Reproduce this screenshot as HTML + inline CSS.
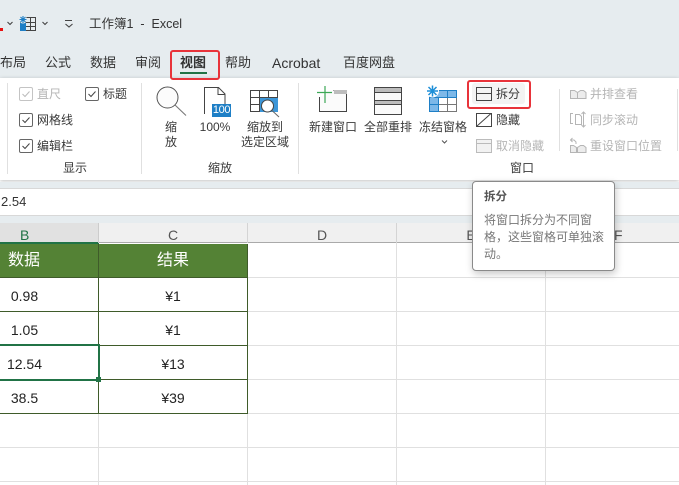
<!DOCTYPE html>
<html><head><meta charset="utf-8"><style>
html,body{margin:0;padding:0}
body{width:679px;height:485px;position:relative;overflow:hidden;background:#fff;font-family:"Liberation Sans","Noto Sans CJK SC",sans-serif;color:#333}
.a{position:absolute;white-space:nowrap}
.t{font-size:12px;line-height:16px;color:#3a3a3a}
.tab{font-size:13px;line-height:18px;top:54px;color:#333}
.d{color:#b5b5b5}
.c{text-align:center}
.cell{font-size:14px;line-height:20px;text-align:center;color:#222}
.ln{position:absolute;background:#e0e0e0}
.dg{position:absolute;background:#3f5b2a}
svg{position:absolute;overflow:visible}
.cb{position:absolute;width:12px;height:12px;border:1px solid #666;border-radius:2px;background:#fff}
.cb svg{left:0;top:0}
</style></head><body>
<div class="a" style="left:0;top:0;width:679px;height:78px;background:#e6ecef"></div>
<div class="a" style="left:0;top:28px;width:3px;height:3px;background:#e81010"></div>
<svg style="left:0;top:0" width="240" height="40" fill="none">
<path d="M7.500 22l2.500 2.500 2.500-2.500M42.500 22l2.500 2.500 2.500-2.500" stroke="#444" stroke-width="1.100"/>
<path d="M65 20.500h7M65.500 24l3.500 3 3.500-3" stroke="#444" stroke-width="1.100"/>
<rect x="20.500" y="17.500" width="15" height="13" stroke="#444"/>
<path d="M20 22.500h16M20 26.500h16M25.500 17v14M30.500 17v14" stroke="#444"/>
<rect x="20" y="23" width="6" height="8" fill="#1e7fc6"/>
<circle cx="23" cy="19.500" r="4" fill="#e6ecef"/>
<path d="M26.500 19.500h-7M23 16v7M20.500 17l5 5M25.500 17l-5 5" stroke="#1e7fc6" stroke-width="1.100"/>
</svg>
<div class="a" style="left:89px;top:15px;font-size:12.500px;line-height:18px;color:#333">工作簿1 &nbsp;-&nbsp; Excel</div>

<div class="a tab" style="left:0">布局</div>
<div class="a tab" style="left:45px">公式</div>
<div class="a tab" style="left:90px">数据</div>
<div class="a tab" style="left:135px">审阅</div>
<div class="a tab" style="left:180px;font-weight:bold">视图</div>
<div class="a" style="left:180px;top:72px;width:27px;height:2px;background:#217346"></div>
<div class="a" style="left:170px;top:50px;width:46px;height:26px;border:2px solid #e8333a;border-radius:3px;z-index:3"></div>
<div class="a tab" style="left:225px">帮助</div>
<div class="a tab" style="left:272px;font-size:14px">Acrobat</div>
<div class="a tab" style="left:343px">百度网盘</div>

<div class="a" style="left:0;top:78px;width:679px;height:102px;background:#fff;box-shadow:0 1px 4px rgba(0,0,0,.25)"></div>
<div class="a" style="left:0;top:182px;width:679px;height:6px;background:#e6ecef"></div>
<div class="ln" style="left:7px;top:83px;width:1px;height:91px"></div>
<div class="ln" style="left:141px;top:83px;width:1px;height:91px"></div>
<div class="ln" style="left:298px;top:83px;width:1px;height:91px"></div>
<div class="ln" style="left:559px;top:89px;width:1px;height:62px"></div>
<div class="ln" style="left:677px;top:89px;width:1px;height:62px"></div>

<!-- show group -->
<div class="cb" style="left:19px;top:87px;border-color:#c4c4c4"><svg width="12" height="12" fill="none"><path d="M2.500 6l2.500 2.500 4.500-5" stroke="#bbb"/></svg></div>
<div class="a t d" style="left:37px;top:86px">直尺</div>
<div class="cb" style="left:85px;top:87px"><svg width="12" height="12" fill="none"><path d="M2.500 6l2.500 2.500 4.500-5" stroke="#444"/></svg></div>
<div class="a t" style="left:103px;top:86px">标题</div>
<div class="cb" style="left:19px;top:113px"><svg width="12" height="12" fill="none"><path d="M2.500 6l2.500 2.500 4.500-5" stroke="#444"/></svg></div>
<div class="a t" style="left:37px;top:112px">网格线</div>
<div class="cb" style="left:19px;top:139px"><svg width="12" height="12" fill="none"><path d="M2.500 6l2.500 2.500 4.500-5" stroke="#444"/></svg></div>
<div class="a t" style="left:37px;top:138px">编辑栏</div>
<div class="a t c" style="left:50px;top:160px;width:50px">显示</div>

<div class="a" style="left:472px;top:83px;width:53px;height:21px;background:#f3f3f3;border-radius:3px"></div>

<svg style="left:0;top:0" width="679" height="180" fill="none">
<!-- zoom group -->
<circle cx="167.500" cy="97.500" r="10.500" stroke="#555" fill="#fcfcfc"/>
<path d="M175 105l11 10.500" stroke="#777" stroke-width="1.100"/>
<path d="M204.500 114V87.500h14l6.500 6.500v10M218 87.500v7h7" stroke="#444" fill="#fff"/>
<rect x="212" y="104" width="19" height="13" fill="#1e7fc6"/>
<rect x="250.500" y="90.500" width="27" height="21" stroke="#444" fill="#fff"/>
<path d="M250 97.500h28M250 104.500h11M259.500 90v22M268.500 90v8" stroke="#444"/>
<rect x="260" y="98" width="18" height="14" fill="#3c96d8"/>
<circle cx="267.500" cy="106" r="6" stroke="#444" fill="#fff"/>
<path d="M272 110.500l7 6.500" stroke="#666"/>

<!-- window group -->
<path d="M319.500 97v14.500h27v-21h-13" stroke="#444" fill="#fbfbfb"/>
<rect x="334" y="90" width="13" height="4" fill="#bdbdbd"/>
<path d="M317 92.500h15M325 86v17" stroke="#3ca856" stroke-width="1.200"/>
<rect x="374.500" y="87.500" width="27" height="27" stroke="#444" fill="#fafafa"/>
<rect x="375" y="88" width="26" height="4" fill="#bdbdbd"/>
<rect x="375" y="100" width="26" height="4" fill="#bdbdbd"/>
<path d="M374 92.500h28M374 100.500h28M374 104.500h28" stroke="#444"/>
<rect x="429.500" y="90.500" width="27" height="21" stroke="#1e7fc6" fill="#fff"/>
<rect x="429" y="90" width="28" height="7" fill="#7db8e8"/>
<rect x="429" y="97" width="10" height="15" fill="#7db8e8"/>
<path d="M429.500 90.500h27v7h-27zM429.500 97.500h9v14h-9zM447.500 90v7M429 104.500h10" stroke="#1e7fc6"/>
<path d="M439 104.500h18M447.500 98v14M456.500 98v13.500H439" stroke="#777"/>
<circle cx="432.500" cy="91" r="6.500" fill="#fff"/>
<path d="M427 91h11M432.500 85.500v11M428.500 87l8 8M436.500 87l-8 8" stroke="#1e8fd8" stroke-width="1.500"/>
<path d="M442 140.500l2.500 2.500 2.500-2.500" stroke="#555"/>

<rect x="476.500" y="87.500" width="15" height="13" stroke="#444"/>
<path d="M476 93.500h16" stroke="#444"/>
<rect x="476.500" y="113.500" width="15" height="13" stroke="#444"/>
<path d="M477 126l14-12.500" stroke="#444"/>
<rect x="476.500" y="139.500" width="15" height="13" stroke="#bbb" fill="#f2f2f2"/>
<path d="M476 143.500h16" stroke="#bbb"/>

<!-- disabled icons -->
<path d="M570.500 98.500v-8h4l3 2v6zM577.500 98.500v-6l3-2h3l2.500 2v6z" stroke="#b5b5b5" fill="#ececec"/>
<path d="M573 113.500h-2.500v10h2.500M575.500 124.500v-10h4l2 2v8zM583.500 112v15M581.500 114l2-2 2 2M581.500 125l2 2 2-2" stroke="#b5b5b5"/>
<path d="M570.500 152.500v-7h3l3 2v5zM577.500 152.500v-5l3-2h3l2.500 2v5z" stroke="#b5b5b5" fill="#ececec"/>
<path d="M572.500 138l-2 2 2 2M571 140h3l2 2v2" stroke="#b5b5b5"/>
</svg>
<div class="a" style="left:211px;top:104px;width:21px;text-align:center;font-size:11px;line-height:13px;color:#fff;letter-spacing:-.4px">100</div>

<div class="a t c" style="left:156px;top:119px;width:30px">缩</div>
<div class="a t c" style="left:156px;top:134px;width:30px">放</div>
<div class="a t c" style="left:195px;top:119px;width:40px">100%</div>
<div class="a t c" style="left:235px;top:119px;width:60px">缩放到</div>
<div class="a t c" style="left:235px;top:134px;width:60px">选定区域</div>
<div class="a t c" style="left:195px;top:160px;width:50px">缩放</div>

<div class="a t" style="left:309px;top:119px">新建窗口</div>
<div class="a t" style="left:364px;top:119px">全部重排</div>
<div class="a t" style="left:419px;top:119px">冻结窗格</div>

<div class="a" style="left:467px;top:80px;width:60px;height:25px;border:2px solid #e8333a;border-radius:3px"></div>
<div class="a t" style="left:496px;top:86px">拆分</div>
<div class="a t" style="left:496px;top:112px">隐藏</div>
<div class="a t d" style="left:496px;top:138px">取消隐藏</div>
<div class="a t c" style="left:497px;top:160px;width:50px">窗口</div>
<div class="a t d" style="left:590px;top:86px">并排查看</div>
<div class="a t d" style="left:590px;top:112px">同步滚动</div>
<div class="a t d" style="left:590px;top:138px">重设窗口位置</div>

<!-- formula bar -->
<div class="a" style="left:0;top:188px;width:679px;height:28px;background:#fff;border-top:1px solid #d8d8d8;border-bottom:1px solid #d8d8d8;box-sizing:border-box"></div>
<div class="a" style="left:1px;top:193px;font-size:13px;line-height:18px;color:#333">2.54</div>
<div class="a" style="left:0;top:216px;width:679px;height:7px;background:#e6ecef"></div>

<!-- column header -->
<div class="a" style="left:0;top:223px;width:679px;height:20px;background:#f0f0f0;border-bottom:1px solid #aaa;box-sizing:border-box"></div>
<div class="a" style="left:0;top:223px;width:99px;height:20px;background:#e1e1e1"></div>
<div class="a" style="left:0;top:242px;width:99px;height:2px;background:#217346"></div>
<div class="ln" style="left:98px;top:223px;width:1px;height:20px;background:#ccc"></div>
<div class="ln" style="left:247px;top:223px;width:1px;height:20px;background:#d4d4d4"></div>
<div class="ln" style="left:396px;top:223px;width:1px;height:20px;background:#d4d4d4"></div>
<div class="ln" style="left:545px;top:223px;width:1px;height:20px;background:#d4d4d4"></div>
<div class="a" style="left:20px;top:226px;font-size:14px;line-height:18px;color:#217346">B</div>
<div class="a c" style="left:99px;top:226px;width:148px;font-size:14px;line-height:18px;color:#555">C</div>
<div class="a c" style="left:248px;top:226px;width:148px;font-size:14px;line-height:18px;color:#555">D</div>
<div class="a c" style="left:397px;top:226px;width:148px;font-size:14px;line-height:18px;color:#555">E</div>
<div class="a" style="left:614px;top:226px;font-size:14px;line-height:18px;color:#555">F</div>

<!-- grid -->
<div class="ln" style="left:0;top:277px;width:679px;height:1px"></div>
<div class="ln" style="left:0;top:311px;width:679px;height:1px"></div>
<div class="ln" style="left:0;top:345px;width:679px;height:1px"></div>
<div class="ln" style="left:0;top:379px;width:679px;height:1px"></div>
<div class="ln" style="left:0;top:413px;width:679px;height:1px"></div>
<div class="ln" style="left:0;top:447px;width:679px;height:1px"></div>
<div class="ln" style="left:0;top:481px;width:679px;height:1px"></div>
<div class="ln" style="left:98px;top:413px;width:1px;height:72px"></div>
<div class="ln" style="left:247px;top:413px;width:1px;height:72px"></div>
<div class="ln" style="left:396px;top:243px;width:1px;height:242px"></div>
<div class="ln" style="left:545px;top:243px;width:1px;height:242px"></div>

<div class="a" style="left:0;top:244px;width:247px;height:33px;background:#548235"></div>
<div class="dg" style="left:0;top:277px;width:248px;height:1px"></div>
<div class="dg" style="left:0;top:311px;width:248px;height:1px"></div>
<div class="dg" style="left:0;top:345px;width:248px;height:1px"></div>
<div class="dg" style="left:0;top:379px;width:248px;height:1px"></div>
<div class="dg" style="left:0;top:413px;width:248px;height:1px"></div>
<div class="dg" style="left:98px;top:244px;width:1px;height:170px"></div>
<div class="dg" style="left:247px;top:244px;width:1px;height:170px"></div>

<div class="a cell" style="left:8px;top:251px;width:32px;color:#fff;font-size:16px">数据</div>
<div class="a cell" style="left:99px;top:251px;width:148px;color:#fff;font-size:16px">结果</div>
<div class="a cell" style="left:5px;top:286px;width:39px">0.98</div>
<div class="a cell" style="left:5px;top:320px;width:39px">1.05</div>
<div class="a cell" style="left:5px;top:354px;width:39px">12.54</div>
<div class="a cell" style="left:5px;top:388px;width:39px">38.5</div>
<div class="a cell" style="left:99px;top:286px;width:148px">¥1</div>
<div class="a cell" style="left:99px;top:320px;width:148px">¥1</div>
<div class="a cell" style="left:99px;top:354px;width:148px">¥13</div>
<div class="a cell" style="left:99px;top:388px;width:148px">¥39</div>

<div class="a" style="left:0;top:344px;width:100px;height:2px;background:#217346"></div>
<div class="a" style="left:0;top:379px;width:100px;height:2px;background:#217346"></div>
<div class="a" style="left:98px;top:344px;width:2px;height:36px;background:#217346"></div>
<div class="a" style="left:96px;top:377px;width:5px;height:5px;background:#217346"></div>

<!-- tooltip -->
<div class="a" style="left:472px;top:181px;width:141px;height:88px;background:#fff;border:1px solid #8a8a8a;border-radius:4px;box-shadow:1px 3px 8px rgba(0,0,0,.22);z-index:5">
<div class="a" style="left:11px;top:7px;font-size:11.500px;line-height:16px;font-weight:bold;color:#555">拆分</div>
<div class="a" style="left:11px;top:30px;font-size:12px;line-height:17px;color:#777">将窗口拆分为不同窗</div>
<div class="a" style="left:11px;top:47px;font-size:12px;line-height:17px;color:#777">格，这些窗格可单独滚</div>
<div class="a" style="left:11px;top:64px;font-size:12px;line-height:17px;color:#777">动。</div>
</div>
</body></html>
